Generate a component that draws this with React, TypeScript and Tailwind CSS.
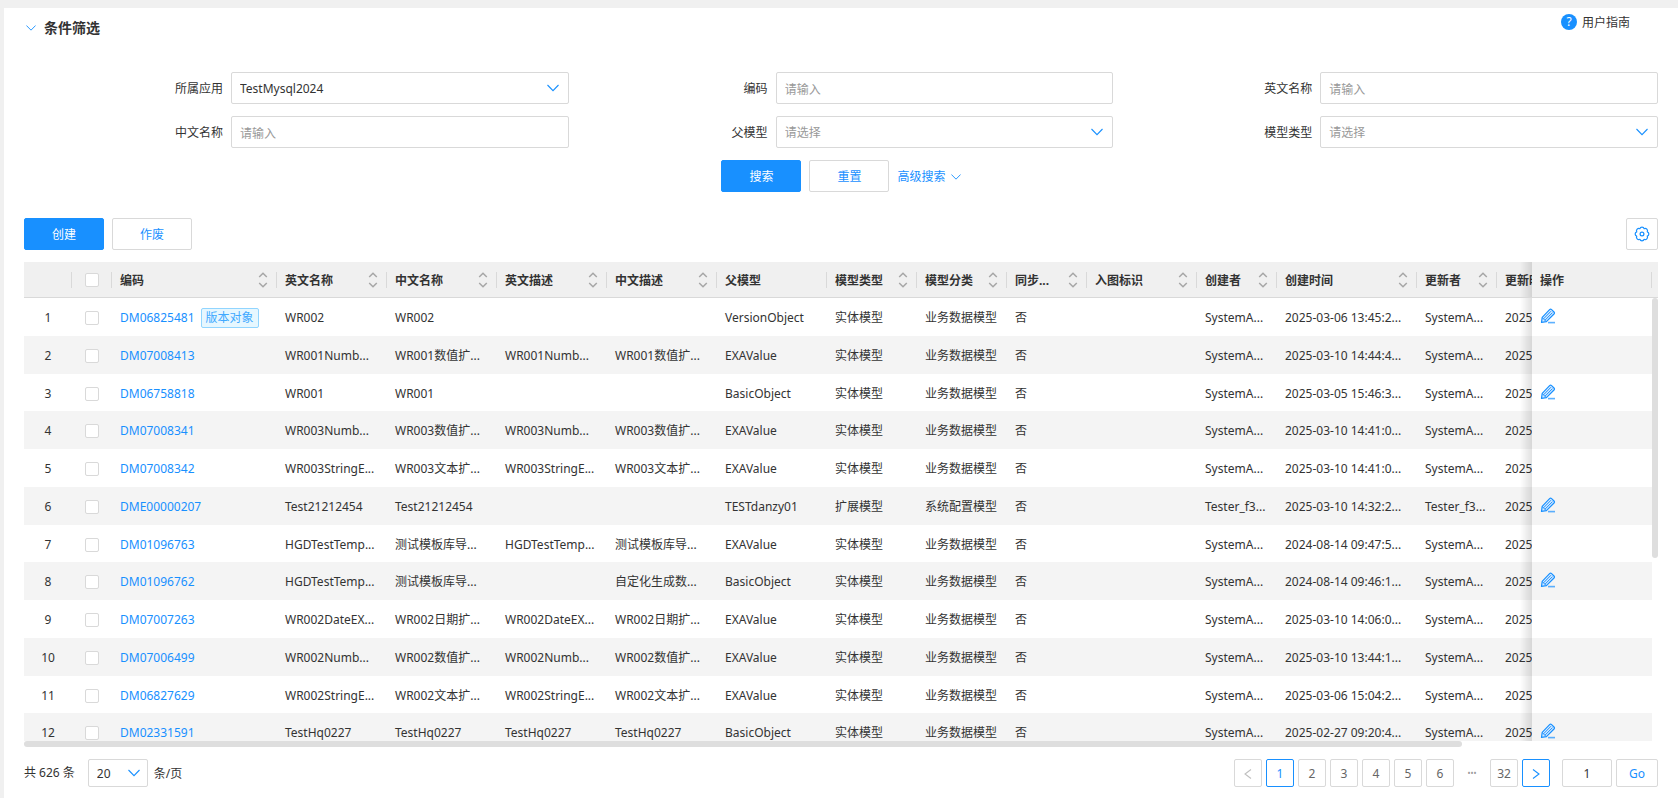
import { ReactNode } from "react";

interface Column {
  title: string;
  width: string;
  sortable: boolean;
}

interface Model {
  code: string;
  tag?: string;
  nameEn: string;
  nameCn: string;
  descEn: string;
  descCn: string;
  parent: string;
  type: string;
  category: string;
  creator: string;
  createdAt: string;
  editable?: boolean;
}

const columns: Column[] = [
  { title: "编码", width: "w-[165px]", sortable: true },
  { title: "英文名称", width: "w-[110px]", sortable: true },
  { title: "中文名称", width: "w-[110px]", sortable: true },
  { title: "英文描述", width: "w-[110px]", sortable: true },
  { title: "中文描述", width: "w-[110px]", sortable: true },
  { title: "父模型", width: "w-[110px]", sortable: false },
  { title: "模型类型", width: "w-[90px]", sortable: true },
  { title: "模型分类", width: "w-[90px]", sortable: true },
  { title: "同步...", width: "w-[80px]", sortable: true },
  { title: "入图标识", width: "w-[110px]", sortable: true },
  { title: "创建者", width: "w-[80px]", sortable: true },
  { title: "创建时间", width: "w-[140px]", sortable: true },
  { title: "更新者", width: "w-[80px]", sortable: true },
  { title: "更新时间", width: "w-[140px]", sortable: true },
];

const entity = { type: "实体模型", category: "业务数据模型", creator: "SystemA..." };

const models: Model[] = [
  { ...entity, code: "DM06825481", tag: "版本对象", nameEn: "WR002", nameCn: "WR002", descEn: "", descCn: "", parent: "VersionObject", createdAt: "2025-03-06 13:45:2...", editable: true },
  { ...entity, code: "DM07008413", nameEn: "WR001Numb...", nameCn: "WR001数值扩...", descEn: "WR001Numb...", descCn: "WR001数值扩...", parent: "EXAValue", createdAt: "2025-03-10 14:44:4..." },
  { ...entity, code: "DM06758818", nameEn: "WR001", nameCn: "WR001", descEn: "", descCn: "", parent: "BasicObject", createdAt: "2025-03-05 15:46:3...", editable: true },
  { ...entity, code: "DM07008341", nameEn: "WR003Numb...", nameCn: "WR003数值扩...", descEn: "WR003Numb...", descCn: "WR003数值扩...", parent: "EXAValue", createdAt: "2025-03-10 14:41:0..." },
  { ...entity, code: "DM07008342", nameEn: "WR003StringE...", nameCn: "WR003文本扩...", descEn: "WR003StringE...", descCn: "WR003文本扩...", parent: "EXAValue", createdAt: "2025-03-10 14:41:0..." },
  { code: "DME00000207", nameEn: "Test21212454", nameCn: "Test21212454", descEn: "", descCn: "", parent: "TESTdanzy01", type: "扩展模型", category: "系统配置模型", creator: "Tester_f3...", createdAt: "2025-03-10 14:32:2...", editable: true },
  { ...entity, code: "DM01096763", nameEn: "HGDTestTemp...", nameCn: "测试模板库导...", descEn: "HGDTestTemp...", descCn: "测试模板库导...", parent: "EXAValue", createdAt: "2024-08-14 09:47:5..." },
  { ...entity, code: "DM01096762", nameEn: "HGDTestTemp...", nameCn: "测试模板库导...", descEn: "", descCn: "自定化生成数...", parent: "BasicObject", createdAt: "2024-08-14 09:46:1...", editable: true },
  { ...entity, code: "DM07007263", nameEn: "WR002DateEX...", nameCn: "WR002日期扩...", descEn: "WR002DateEX...", descCn: "WR002日期扩...", parent: "EXAValue", createdAt: "2025-03-10 14:06:0..." },
  { ...entity, code: "DM07006499", nameEn: "WR002Numb...", nameCn: "WR002数值扩...", descEn: "WR002Numb...", descCn: "WR002数值扩...", parent: "EXAValue", createdAt: "2025-03-10 13:44:1..." },
  { ...entity, code: "DM06827629", nameEn: "WR002StringE...", nameCn: "WR002文本扩...", descEn: "WR002StringE...", descCn: "WR002文本扩...", parent: "EXAValue", createdAt: "2025-03-06 15:04:2..." },
  { ...entity, code: "DM02331591", nameEn: "TestHq0227", nameCn: "TestHq0227", descEn: "TestHq0227", descCn: "TestHq0227", parent: "BasicObject", createdAt: "2025-02-27 09:20:4...", editable: true },
];

// Everything was last updated in 2025, also the models created in 2024
const updatedAt = (model: Model) => model.createdAt.replace(/^2024/, "2025");

const Chevron = (props: { className: string }) => (
  <svg viewBox="0 0 12 12" fill="none" stroke="currentColor" strokeWidth="1.1" className={props.className}>
    <path d="M0.5 3 6 8.6 11.5 3" />
  </svg>
);

const PageArrow = (props: { className?: string }) => (
  <svg viewBox="0 0 12 12" fill="none" stroke="currentColor" strokeWidth="1.1" className={`size-3 ${props.className || ""}`}>
    <path d="M9 1.5 3 6 9 10.5" />
  </svg>
);

const SortIcon = () => (
  <svg viewBox="0 0 10 16" fill="none" stroke="#a6a6a6" strokeWidth="1.5" className="h-4 w-[10px]">
    <path d="M1.2 5 5 1.2 8.8 5M1.2 11 5 14.8 8.8 11" />
  </svg>
);

const GearIcon = () => (
  <svg viewBox="0 0 16 16" fill="none" stroke="currentColor" strokeWidth="1.2" className="size-4">
    <path
      d="M13.27 10.18A2.3 2.3 0 0 1 10.18 13.27A2.3 2.3 0 0 1 5.82 13.27A2.3 2.3 0 0 1 2.73 10.18A2.3 2.3 0 0 1 2.73 5.82A2.3 2.3 0 0 1 5.82 2.73A2.3 2.3 0 0 1 10.18 2.73A2.3 2.3 0 0 1 13.27 5.82A2.3 2.3 0 0 1 13.27 10.18Z"
      strokeLinejoin="round"
    />
    <circle cx="8" cy="8" r="1.9" />
  </svg>
);

const EditIcon = () => (
  <svg viewBox="0 0 16 16" fill="none" stroke="currentColor" className="size-4">
    <path
      d="M1.5 14.3 2.2 9.4 9.6 1.6Q10.6 0.7 11.6 1.6L14 4Q14.9 5 14 6L6.4 13.6Z"
      fill="#d6eaff"
      strokeWidth="1.2"
      strokeLinejoin="round"
    />
    <path d="M3.6 10.8 11 3.2M5 12.2 12.5 4.6M2.2 9.6 6.2 13.5" />
    <path d="M8 14.6H15" strokeWidth="1.6" opacity="0.7" />
  </svg>
);

const Field = (props: { id: string; label: string; children: ReactNode }) => (
  <div className="flex items-center">
    <label htmlFor={props.id} className="w-[38%] pt-0.5 pr-2 text-right">
      {props.label}
    </label>
    <div className="relative w-[62%]">{props.children}</div>
  </div>
);

const TextField = (props: { id: string; label: string }) => (
  <Field id={props.id} label={props.label}>
    <input
      id={props.id}
      type="text"
      placeholder="请输入"
      className="h-8 w-full rounded-xs border border-[#d9d9d9] px-2 pt-0.5 placeholder:text-[#999] focus:border-[#1890ff] focus:outline-none"
    />
  </Field>
);

const SelectField = (props: { id: string; label: string; value?: string }) => (
  <Field id={props.id} label={props.label}>
    <select
      id={props.id}
      className={`h-8 w-full appearance-none rounded-xs border border-[#d9d9d9] bg-white px-2 pt-0.5 focus:border-[#1890ff] focus:outline-none ${
        props.value ? "text-[#333]" : "text-[#999]"
      }`}
    >
      <option>{props.value || "请选择"}</option>
    </select>
    <Chevron className="pointer-events-none absolute top-[10px] right-[10px] size-3 text-[#1890ff]" />
  </Field>
);

const Button = (props: { primary?: boolean; children: ReactNode }) => (
  <button
    type="button"
    className={`h-8 w-20 rounded-xs border pt-0.5 ${
      props.primary
        ? "border-[#1890ff] bg-[#1890ff] text-white"
        : "border-[#d9d9d9] bg-white text-[#1890ff]"
    }`}
  >
    {props.children}
  </button>
);

const Checkbox = (props: { label: string }) => (
  <input
    type="checkbox"
    aria-label={props.label}
    className="mx-auto block size-[14px] appearance-none rounded-xs border border-[#d9d9d9] bg-white checked:bg-[#1890ff]"
  />
);

const HeaderCell = (props: { className: string; children?: ReactNode }) => (
  <th className={`h-9 border-b border-[#d9d9d9] bg-[#f0f0f0] p-0 text-left font-bold ${props.className}`}>
    <div className="flex h-4 items-center justify-between border-r border-[#d9d9d9] pr-2 pl-2">
      {props.children}
    </div>
  </th>
);

const Cell = (props: { children?: ReactNode }) => (
  <td className="overflow-hidden p-0 pt-0.5 pl-2 whitespace-nowrap">{props.children}</td>
);

// Fading edge on the left of the pinned column
const pinned =
  "sticky right-0 before:absolute before:top-0 before:bottom-0 before:-left-3 before:w-3 before:bg-linear-to-l before:from-black/12 before:to-transparent";

const ModelTable = () => (
  <div className="mt-3">
    <div className="flex h-[479px]">
      <div className="w-0 grow overflow-hidden">
        <table className="w-[1843px] table-fixed border-separate border-spacing-0">
          <thead>
            <tr>
              <HeaderCell className="w-12" />
              <HeaderCell className="w-10">
                <span className="w-full pl-px">
                  <Checkbox label="全选" />
                </span>
              </HeaderCell>
              {columns.map((column) => (
                <HeaderCell key={column.title} className={column.width}>
                  <span className="pt-0.5 whitespace-nowrap">{column.title}</span>
                  {column.sortable && <SortIcon />}
                </HeaderCell>
              ))}
              <HeaderCell className="w-auto" />
              <HeaderCell className={`w-[120px] ${pinned}`}>
                <span className="pt-0.5">操作</span>
              </HeaderCell>
            </tr>
          </thead>
          <tbody>
            {models.map((model, i) => (
              <tr key={model.code} className="h-[38px] bg-white even:bg-[#f4f4f4] nth-[4n+3]:h-[37px]">
                <td className="p-0 pt-0.5 text-center">{i + 1}</td>
                <td className="p-0 pt-0.5">
                  <Checkbox label={model.code} />
                </td>
                <Cell>
                  <a href="#" className="text-[#1890ff]">
                    {model.code}
                  </a>
                  {model.tag && (
                    <span className="ml-[6px] inline-block rounded-xs border border-[#91d5ff] bg-[#e6f7ff] px-1 leading-[18px] text-[#40a9ff]">
                      {model.tag}
                    </span>
                  )}
                </Cell>
                <Cell>{model.nameEn}</Cell>
                <Cell>{model.nameCn}</Cell>
                <Cell>{model.descEn}</Cell>
                <Cell>{model.descCn}</Cell>
                <Cell>{model.parent}</Cell>
                <Cell>{model.type}</Cell>
                <Cell>{model.category}</Cell>
                <Cell>否</Cell>
                <Cell />
                <Cell>{model.creator}</Cell>
                <Cell>{model.createdAt}</Cell>
                <Cell>{model.creator}</Cell>
                <Cell>{updatedAt(model)}</Cell>
                <Cell />
                <td className={`bg-inherit p-0 pb-0.5 pl-2 ${pinned}`}>
                  {model.editable && (
                    <button type="button" aria-label="编辑" className="block text-[#1890ff]">
                      <EditIcon />
                    </button>
                  )}
                </td>
              </tr>
            ))}
          </tbody>
        </table>
      </div>
      <div className="w-[6px]">
        <div className="h-9 border-b border-[#d9d9d9] bg-[#f0f0f0]" />
        <div className="h-[260px] rounded-full bg-[#dedede]" />
      </div>
    </div>
    <div className="h-[6px] w-[88%] rounded-full bg-[#dedede]" />
  </div>
);

const pageButton = "flex size-7 items-center justify-center rounded-xs border pt-0.5";

const Pagination = () => (
  <div className="mt-3 flex items-center justify-between">
    <div className="flex items-center">
      <span>共 626 条</span>
      <div className="relative mr-[6px] ml-[13px]">
        <select
          aria-label="每页条数"
          className="block h-7 w-[60px] appearance-none rounded-xs border border-[#d9d9d9] bg-white px-2 pt-0.5"
        >
          <option>20</option>
        </select>
        <Chevron className="pointer-events-none absolute top-2 right-2 size-3 text-[#1890ff]" />
      </div>
      <span className="pt-0.5">条/页</span>
    </div>
    <div className="flex items-center gap-1">
      <button type="button" aria-label="上一页" className={`${pageButton} border-[#d9d9d9] text-[#bfbfbf]`}>
        <PageArrow />
      </button>
      <button type="button" className={`${pageButton} border-[#1890ff] text-[#1890ff]`}>
        1
      </button>
      {[2, 3, 4, 5, 6].map((page) => (
        <button key={page} type="button" className={`${pageButton} border-[#d9d9d9] text-[#666]`}>
          {page}
        </button>
      ))}
      <span className="flex size-7 items-start justify-center pt-[6px] text-[8px] leading-4 text-[#999]">•••</span>
      <button type="button" className={`${pageButton} border-[#d9d9d9] text-[#666]`}>
        32
      </button>
      <button type="button" aria-label="下一页" className={`${pageButton} border-[#1890ff] text-[#1890ff]`}>
        <PageArrow className="rotate-180" />
      </button>
      <input
        type="text"
        aria-label="页码"
        defaultValue="1"
        className="ml-2 h-7 w-[50px] rounded-xs border border-[#d9d9d9] text-center"
      />
      <button type="button" className="h-7 w-[42px] rounded-xs border border-[#d9d9d9] pt-0.5 text-[#1890ff]">
        Go
      </button>
    </div>
  </div>
);

export default function App() {
  return (
    <div className="min-h-screen bg-[#f0f0f0] pt-2 pl-1 font-['Noto_Sans','Noto_Sans_CJK_SC',sans-serif] text-xs leading-5 text-[#333]">
      <div className="min-h-[790px] bg-white px-5">
        <div className="flex justify-between">
          <button type="button" className="mt-[10px] flex h-5 items-center gap-2 pl-[2px] text-sm font-bold">
            <Chevron className="size-[10px] text-[#1890ff]" />
            条件筛选
          </button>
          <a href="#" className="mt-1 mr-7 flex h-5 items-center gap-[5px]">
            <span className="flex size-4 items-center justify-center rounded-full bg-[#1890ff] text-white">
              ?
            </span>
            <span className="pt-0.5">用户指南</span>
          </a>
        </div>

        <form>
          <div className="mt-[34px] grid grid-cols-3 gap-y-3">
            <SelectField id="app" label="所属应用" value="TestMysql2024" />
            <TextField id="code" label="编码" />
            <TextField id="nameEn" label="英文名称" />
            <TextField id="nameCn" label="中文名称" />
            <SelectField id="parent" label="父模型" />
            <SelectField id="type" label="模型类型" />
          </div>
          <div className="mt-3 flex items-center justify-center gap-2">
            <Button primary>搜索</Button>
            <Button>重置</Button>
            <button type="button" className="flex items-center gap-[5px] pt-0.5 text-[#1890ff]">
              高级搜索
              <Chevron className="size-[10px]" />
            </button>
          </div>
        </form>

        <div className="mt-[26px] flex gap-2">
          <Button primary>创建</Button>
          <Button>作废</Button>
          <button
            type="button"
            aria-label="设置"
            className="ml-auto flex size-8 items-center justify-center rounded-xs border border-[#d9d9d9] text-[#1890ff]"
          >
            <GearIcon />
          </button>
        </div>

        <ModelTable />
        <Pagination />
      </div>
    </div>
  );
}
